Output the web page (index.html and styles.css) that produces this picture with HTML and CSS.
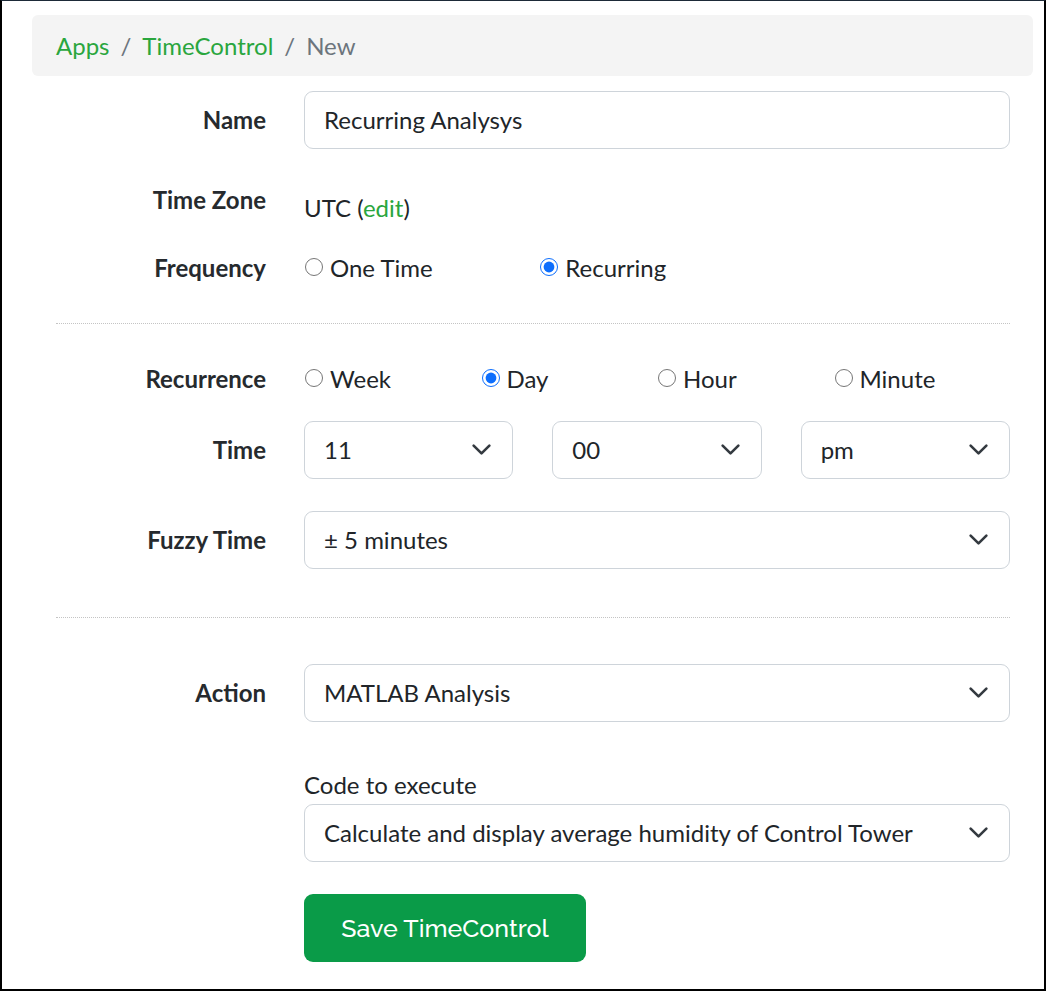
FILE: index.html
```html
<!DOCTYPE html>
<html lang="en">
<head>
<meta charset="utf-8">
<title>TimeControl - New</title>
<link rel="stylesheet" href="styles.css">
</head>
<body>
<div class="page">
  <nav class="breadcrumb">
    <a class="crumb-link" href="#">Apps</a>
    <span class="crumb-sep">/</span>
    <a class="crumb-link" href="#">TimeControl</a>
    <span class="crumb-sep">/</span>
    <span class="crumb-current">New</span>
  </nav>

  <form class="form">
    <div class="row row-name">
      <label class="label">Name</label>
      <div class="control"><div class="input">Recurring Analysys</div></div>
    </div>

    <div class="row row-tz">
      <label class="label">Time Zone</label>
      <div class="control tz-value">UTC (<a class="link" href="#">edit</a>)</div>
    </div>

    <div class="row row-freq">
      <label class="label">Frequency</label>
      <div class="control radios radios-3">
        <label class="radio"><input type="radio" name="freq"> One Time</label>
        <label class="radio"><input type="radio" name="freq" checked> Recurring</label>
      </div>
    </div>

    <hr class="sep sep-1">

    <div class="row row-rec">
      <label class="label">Recurrence</label>
      <div class="control radios radios-4">
        <label class="radio"><input type="radio" name="rec"> Week</label>
        <label class="radio"><input type="radio" name="rec" checked> Day</label>
        <label class="radio"><input type="radio" name="rec"> Hour</label>
        <label class="radio"><input type="radio" name="rec"> Minute</label>
      </div>
    </div>

    <div class="row row-time">
      <label class="label">Time</label>
      <div class="control time-grid">
        <div class="select"><span>11</span><svg class="chev" viewBox="0 0 16 16"><path d="M2 5l6 6 6-6"/></svg></div>
        <div class="select"><span>00</span><svg class="chev" viewBox="0 0 16 16"><path d="M2 5l6 6 6-6"/></svg></div>
        <div class="select"><span>pm</span><svg class="chev" viewBox="0 0 16 16"><path d="M2 5l6 6 6-6"/></svg></div>
      </div>
    </div>

    <div class="row row-fuzzy">
      <label class="label">Fuzzy Time</label>
      <div class="control">
        <div class="select"><span>± 5 minutes</span><svg class="chev" viewBox="0 0 16 16"><path d="M2 5l6 6 6-6"/></svg></div>
      </div>
    </div>

    <hr class="sep sep-2">

    <div class="row row-action">
      <label class="label">Action</label>
      <div class="control">
        <div class="select"><span>MATLAB Analysis</span><svg class="chev" viewBox="0 0 16 16"><path d="M2 5l6 6 6-6"/></svg></div>
      </div>
    </div>

    <div class="row row-code">
      <div class="label"></div>
      <div class="control">
        <div class="sub-label">Code to execute</div>
        <div class="select select-code"><span>Calculate and display average humidity of Control Tower</span><svg class="chev" viewBox="0 0 16 16"><path d="M2 5l6 6 6-6"/></svg></div>
        <button type="button" class="btn-save">Save TimeControl</button>
      </div>
    </div>
  </form>
</div>
</body>
</html>
```

FILE: styles.css
```css
* { box-sizing: border-box; }

html, body {
  margin: 0;
  padding: 0;
  height: 100%;
}

body {
  background: #fff;
  font-family: "Source Sans Pro", "Lato", "Liberation Sans", sans-serif;
  font-size: 24px;
  line-height: 36px;
  color: #212529;
}

.page {
  height: 991px;
  border: 2px solid #000;
  border-top: 1px solid #1d2a38;
  overflow: hidden;
}

.breadcrumb {
  margin: 14px 11px 0 30px;
  height: 61px;
  background: #f4f4f4;
  border-radius: 6px;
  display: flex;
  align-items: center;
  padding: 0 24px;
}

.crumb-link {
  color: #2aa63e;
  text-decoration: none;
}

.crumb-sep {
  color: #6c757d;
  padding: 0 11px;
}

.crumb-current {
  color: #6c757d;
}

.form {
  padding: 0 34px 0 54px;
}

.row {
  display: grid;
  grid-template-columns: 210px 1fr;
  column-gap: 38px;
  align-items: center;
}

.label {
  text-align: right;
  font-weight: 700;
  color: #262a2e;
}

.control {
  min-width: 0;
}

.input,
.select {
  height: 58px;
  border: 1px solid #ced4da;
  border-radius: 9px;
  padding: 0 19px;
  display: flex;
  align-items: center;
  background: #fff;
  color: #212529;
}

.select {
  justify-content: space-between;
  padding-right: 20px;
}

.chev {
  width: 21px;
  height: 21px;
  flex: none;
  margin-top: -2px;
  fill: none;
  stroke: #343a40;
  stroke-width: 2;
  stroke-linecap: round;
  stroke-linejoin: round;
}

.link {
  color: #2aa63e;
  text-decoration: none;
}

.row-name { margin-top: 15px; }

.row-tz {
  margin-top: 33px;
  align-items: start;
}

.tz-value { padding-top: 8px; }

.row-freq { margin-top: 24px; }

.radios { display: grid; }
.radios-3 { grid-template-columns: repeat(3, 1fr); }
.radios-4 { grid-template-columns: repeat(4, 1fr); }

.radio {
  display: flex;
  align-items: center;
  gap: 7px;
}

.radio input {
  width: 18px;
  height: 18px;
  margin: -3px 0 0 1px;
  accent-color: #0d6efd;
}

.sep {
  border: 0;
  border-top: 1px dotted #c4c4c4;
  margin: 0;
  height: 0;
}

.sep-1 { margin-top: 37px; }
.row-rec { margin-top: 37px; }

.row-time { margin-top: 24px; }

.time-grid {
  display: grid;
  grid-template-columns: repeat(3, 1fr);
  column-gap: 39px;
}

.row-fuzzy { margin-top: 32px; }

.sep-2 { margin-top: 48px; }
.row-action { margin-top: 46px; }

.row-code { margin-top: 45px; align-items: start; }

.sub-label {
  line-height: 36px;
}

.select-code { margin-top: 1px; }

.btn-save {
  margin-top: 32px;
  height: 68px;
  width: 282px;
  border: 0;
  border-radius: 9px;
  background: #0a9b48;
  color: #fff;
  font-family: "Raleway", "Lato", "Open Sans", sans-serif;
  font-size: 25px;
  font-weight: 500;
  padding: 0;
  display: block;
}
```
